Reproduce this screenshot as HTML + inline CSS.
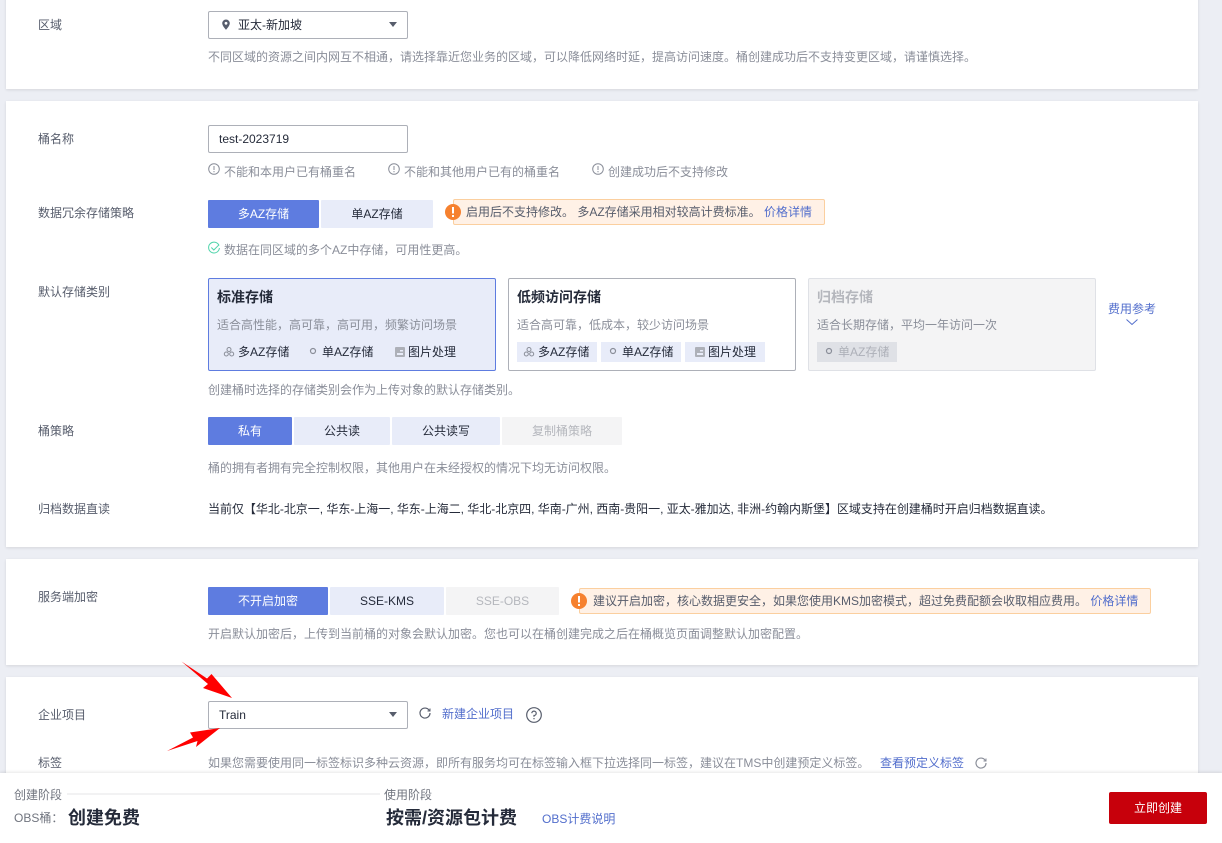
<!DOCTYPE html>
<html lang="zh"><head><meta charset="utf-8">
<style>
html,body{margin:0;padding:0}
body{width:1222px;height:843px;position:relative;overflow:hidden;background:#eceef4;font:12px/18px "Liberation Sans","Noto Sans CJK SC",sans-serif;color:#252b3a}
.p{position:absolute;left:6px;width:1192px;background:#fff;box-shadow:0 1px 3px rgba(0,0,0,.1)}
.t{position:absolute;white-space:nowrap;line-height:18px}
.l{color:#575d6c}.h{color:#8a8e99}.a{color:#526ecc}
.b{position:absolute;box-sizing:border-box;text-align:center;line-height:28px;height:28px;background:#e8ecf9;color:#252b3a;border-radius:1px}
.on{background:#5e7ce0;color:#fff}.dis{background:#f4f4f5;color:#b5b7bd}
.sel{position:absolute;left:208px;width:200px;height:28px;box-sizing:border-box;border:1px solid #adb0b8;border-radius:2px;background:#fff}
.caret{position:absolute;left:389px;width:0;height:0;border-left:4px solid transparent;border-right:4px solid transparent;border-top:5px solid #575d6c}
.warn{position:absolute;height:26px;box-sizing:border-box;background:#fff1e6;border:1px solid #fbcf9f;border-radius:2px;line-height:24px;white-space:nowrap;color:#575d6c}
.card{position:absolute;top:278px;width:288px;height:93px;box-sizing:border-box;border:1px solid #adb0b8;border-radius:2px;background:#fff}
.tag{position:absolute;height:20px;width:80px;line-height:20px;background:#e8ecf9;white-space:nowrap;color:#252b3a}
svg{position:absolute;overflow:visible}
</style></head><body>
<div class="p" style="top:-5px;height:94px"></div>
<div class="p" style="top:101px;height:446px"></div>
<div class="p" style="top:559px;height:106px"></div>
<div class="p" style="top:677px;height:120px"></div>

<div class="t l" style="left:38px;top:16px">区域</div>
<div class="sel" style="top:11px"></div>
<svg style="left:221px;top:19px" width="10" height="12" viewBox="0 0 10 12"><path d="M5 .5a3.8 3.8 0 0 0-3.8 3.8C1.2 7 5 10.8 5 10.8S8.800 7 8.800 4.300A3.800 3.800 0 0 0 5 .5z" fill="#575d6c"/><circle cx="5" cy="4.300" r="1.400" fill="#fff"/></svg>
<div class="t" style="left:238px;top:16px">亚太-新加坡</div>
<div class="caret" style="top:22px"></div>
<div class="t h" style="left:208px;top:48px">不同区域的资源之间内网互不相通，请选择靠近您业务的区域，可以降低网络时延，提高访问速度。桶创建成功后不支持变更区域，请谨慎选择。</div>

<div class="t l" style="left:38px;top:130px">桶名称</div>
<div class="sel" style="top:125px"></div>
<div class="t" style="left:219px;top:130px">test-2023719</div>
<svg style="left:208px;top:163px" width="12" height="12" viewBox="0 0 12 12" fill="none" stroke="#8a8e99"><circle cx="6" cy="6" r="5.300"/><path d="M6 3v4M6 8v1.200"/></svg>
<div class="t h" style="left:224px;top:163px">不能和本用户已有桶重名</div>
<svg style="left:388px;top:163px" width="12" height="12" viewBox="0 0 12 12" fill="none" stroke="#8a8e99"><circle cx="6" cy="6" r="5.300"/><path d="M6 3v4M6 8v1.200"/></svg>
<div class="t h" style="left:404px;top:163px">不能和其他用户已有的桶重名</div>
<svg style="left:592px;top:163px" width="12" height="12" viewBox="0 0 12 12" fill="none" stroke="#8a8e99"><circle cx="6" cy="6" r="5.300"/><path d="M6 3v4M6 8v1.200"/></svg>
<div class="t h" style="left:608px;top:163px">创建成功后不支持修改</div>

<div class="t l" style="left:38px;top:204px">数据冗余存储策略</div>
<div class="b on" style="left:208px;top:200px;width:111px">多AZ存储</div>
<div class="b" style="left:321px;top:200px;width:112px">单AZ存储</div>
<div class="warn" style="left:453px;top:199px;width:372px;padding-left:12px">启用后不支持修改。 多AZ存储采用相对较高计费标准。 <span class="a">价格详情</span></div>
<svg style="left:445px;top:204px" width="16" height="16" viewBox="0 0 16 16"><circle cx="8" cy="8" r="8" fill="#f6812f"/><path d="M8 3v6.500M8 11v2" stroke="#fff" stroke-width="2"/></svg>
<svg style="left:208px;top:242px" width="12" height="12" viewBox="0 0 12 12" fill="none" stroke="#50d4ab"><path d="M11 3.500A5.400 5.400 0 1 0 11.400 6"/><path d="M3.300 5.500L5.800 8 11 2.800" /></svg>
<div class="t h" style="left:224px;top:241px">数据在同区域的多个AZ中存储，可用性更高。</div>

<div class="t l" style="left:38px;top:283px">默认存储类别</div>
<div class="card" style="left:208px;background:#e8ecf9;border-color:#5e7ce0"></div>
<div class="t" style="left:217px;top:288px;font-size:14px;font-weight:bold">标准存储</div>
<div class="t h" style="left:217px;top:316px">适合高性能，高可靠，高可用，频繁访问场景</div>
<div class="t" style="left:238px;top:343px">多AZ存储</div>
<div class="t" style="left:322px;top:343px">单AZ存储</div>
<div class="t" style="left:408px;top:343px">图片处理</div>
<svg style="left:224px;top:347px" width="10" height="10" viewBox="0 0 10 10" fill="none" stroke="#8a8e99"><circle cx="5" cy="2.500" r="2"/><circle cx="2.300" cy="7" r="2"/><circle cx="7.700" cy="7" r="2"/></svg>
<svg style="left:309px;top:347px" width="8" height="8" viewBox="0 0 8 8" fill="none" stroke="#8a8e99" stroke-width="1.200"><circle cx="4" cy="4" r="2.500"/></svg>
<svg style="left:395px;top:347px" width="10" height="10" viewBox="0 0 10 10" fill="#adb0b8"><path d="M1 0h8a1 1 0 0 1 1 1v8a1 1 0 0 1-1 1H1a1 1 0 0 1-1-1V1a1 1 0 0 1 1-1zm4 3v1.500h3V3zM2 6v2h6V6z"/></svg>

<div class="card" style="left:508px"></div>
<div class="t" style="left:517px;top:288px;font-size:14px;font-weight:bold">低频访问存储</div>
<div class="t h" style="left:517px;top:316px">适合高可靠，低成本，较少访问场景</div>
<div class="tag" style="left:517px;top:342px;padding-left:21px;width:59px">多AZ存储</div>
<div class="tag" style="left:601px;top:342px;padding-left:21px;width:59px">单AZ存储</div>
<div class="tag" style="left:685px;top:342px;padding-left:23px;width:57px">图片处理</div>
<svg style="left:524px;top:347px" width="10" height="10" viewBox="0 0 10 10" fill="none" stroke="#8a8e99"><circle cx="5" cy="2.500" r="2"/><circle cx="2.300" cy="7" r="2"/><circle cx="7.700" cy="7" r="2"/></svg>
<svg style="left:609px;top:347px" width="8" height="8" viewBox="0 0 8 8" fill="none" stroke="#8a8e99" stroke-width="1.200"><circle cx="4" cy="4" r="2.500"/></svg>
<svg style="left:695px;top:347px" width="10" height="10" viewBox="0 0 10 10" fill="#adb0b8"><path d="M1 0h8a1 1 0 0 1 1 1v8a1 1 0 0 1-1 1H1a1 1 0 0 1-1-1V1a1 1 0 0 1 1-1zm4 3v1.500h3V3zM2 6v2h6V6z"/></svg>

<div class="card" style="left:808px;background:#f4f4f5;border-color:#dfe1e6"></div>
<div class="t" style="left:817px;top:288px;font-size:14px;font-weight:bold;color:#b5b7bd">归档存储</div>
<div class="t h" style="left:817px;top:316px">适合长期存储，平均一年访问一次</div>
<div class="tag" style="left:817px;top:342px;padding-left:21px;width:59px;background:#dfe1e6;color:#adb0b8">单AZ存储</div>
<svg style="left:825px;top:347px" width="8" height="8" viewBox="0 0 8 8" fill="none" stroke="#8a8e99" stroke-width="1.200"><circle cx="4" cy="4" r="2.500"/></svg>
<div class="t a" style="left:1108px;top:300px">费用参考</div>
<svg style="left:1126px;top:319px" width="12" height="7" viewBox="0 0 12 7" fill="none" stroke="#526ecc"><path d="M.5.500L6 5.500 11.500.5"/></svg>
<div class="t h" style="left:208px;top:381px">创建桶时选择的存储类别会作为上传对象的默认存储类别。</div>

<div class="t l" style="left:38px;top:422px">桶策略</div>
<div class="b on" style="left:208px;top:417px;width:84px">私有</div>
<div class="b" style="left:294px;top:417px;width:96px">公共读</div>
<div class="b" style="left:392px;top:417px;width:108px">公共读写</div>
<div class="b dis" style="left:502px;top:417px;width:120px">复制桶策略</div>
<div class="t h" style="left:208px;top:459px">桶的拥有者拥有完全控制权限，其他用户在未经授权的情况下均无访问权限。</div>

<div class="t l" style="left:38px;top:500px">归档数据直读</div>
<div class="t" style="left:208px;top:500px;letter-spacing:-.025px">当前仅【华北-北京一, 华东-上海一, 华东-上海二, 华北-北京四, 华南-广州, 西南-贵阳一, 亚太-雅加达, 非洲-约翰内斯堡】区域支持在创建桶时开启归档数据直读。</div>

<div class="t l" style="left:38px;top:588px">服务端加密</div>
<div class="b on" style="left:208px;top:587px;width:120px">不开启加密</div>
<div class="b" style="left:330px;top:587px;width:114px">SSE-KMS</div>
<div class="b dis" style="left:446px;top:587px;width:113px">SSE-OBS</div>
<div class="warn" style="left:579px;top:588px;width:572px;padding-left:13px">建议开启加密，核心数据更安全，如果您使用KMS加密模式，超过免费配额会收取相应费用。 <span class="a">价格详情</span></div>
<svg style="left:571px;top:593px" width="16" height="16" viewBox="0 0 16 16"><circle cx="8" cy="8" r="8" fill="#f6812f"/><path d="M8 3v6.500M8 11v2" stroke="#fff" stroke-width="2"/></svg>
<div class="t h" style="left:208px;top:625px">开启默认加密后，上传到当前桶的对象会默认加密。您也可以在桶创建完成之后在桶概览页面调整默认加密配置。</div>

<div class="t l" style="left:38px;top:706px">企业项目</div>
<div class="sel" style="top:701px"></div>
<div class="t" style="left:219px;top:706px">Train</div>
<div class="caret" style="top:712px"></div>
<svg style="left:419px;top:707px" width="12" height="12" viewBox="0 0 12 12" fill="none" stroke="#575d6c" stroke-width="1.200"><path d="M10.300 3.500A5 5 0 1 0 11 6"/><path d="M11 1.500v2.500H8.500" stroke-width="1"/></svg>
<div class="t a" style="left:442px;top:705px">新建企业项目</div>
<svg style="left:526px;top:707px" width="16" height="16" viewBox="0 0 16 16" fill="none" stroke="#575d6c" stroke-width="1.200"><circle cx="8" cy="8" r="7.300"/><path d="M5.800 6.200A2.200 2.200 0 1 1 8 8.500v1.300M8 11v1.300"/></svg>

<div class="t l" style="left:38px;top:754px">标签</div>
<div class="t h" style="left:208px;top:754px">如果您需要使用同一标签标识多种云资源，即所有服务均可在标签输入框下拉选择同一标签，建议在TMS中创建预定义标签。</div>
<div class="t a" style="left:880px;top:754px">查看预定义标签</div>
<svg style="left:975px;top:757px" width="12" height="12" viewBox="0 0 12 12" fill="none" stroke="#8a8e99" stroke-width="1.200"><path d="M10.300 3.500A5 5 0 1 0 11 6"/><path d="M11 1.500v2.500H8.500" stroke-width="1"/></svg>

<svg style="left:0;top:0" width="1222" height="843" viewBox="0 0 1222 843"><path d="M181.500 661.500L207 678.500 211.500 674 232 698 203 688 208 684z" fill="#f00"/><path d="M167 751L193 737.500 190 732.500 220 728 196 747 197.500 741z" fill="#f00"/></svg>

<div style="position:absolute;left:0;top:773px;width:1222px;height:70px;background:#fff;box-shadow:0 -1px 3px rgba(0,0,0,.1)"></div>
<div class="t h" style="left:14px;top:786px;color:#71757f">创建阶段</div>
<div class="t h" style="left:384px;top:786px;color:#71757f">使用阶段</div>
<div style="position:absolute;left:67px;top:793px;width:313px;height:2px;background:#f2f2f3"></div>
<div class="t" style="left:14px;top:809px;color:#71757f">OBS桶：</div>
<div class="t" style="left:68px;top:807px;font-size:18px;line-height:22px;font-weight:bold">创建免费</div>
<div class="t" style="left:386px;top:807px;font-size:18px;line-height:22px;font-weight:bold">按需/资源包计费</div>
<div class="t a" style="left:542px;top:810px">OBS计费说明</div>
<div class="b" style="left:1109px;top:792px;width:98px;height:32px;line-height:32px;background:#c7000b;color:#fff;border-radius:2px">立即创建</div>
</body></html>
